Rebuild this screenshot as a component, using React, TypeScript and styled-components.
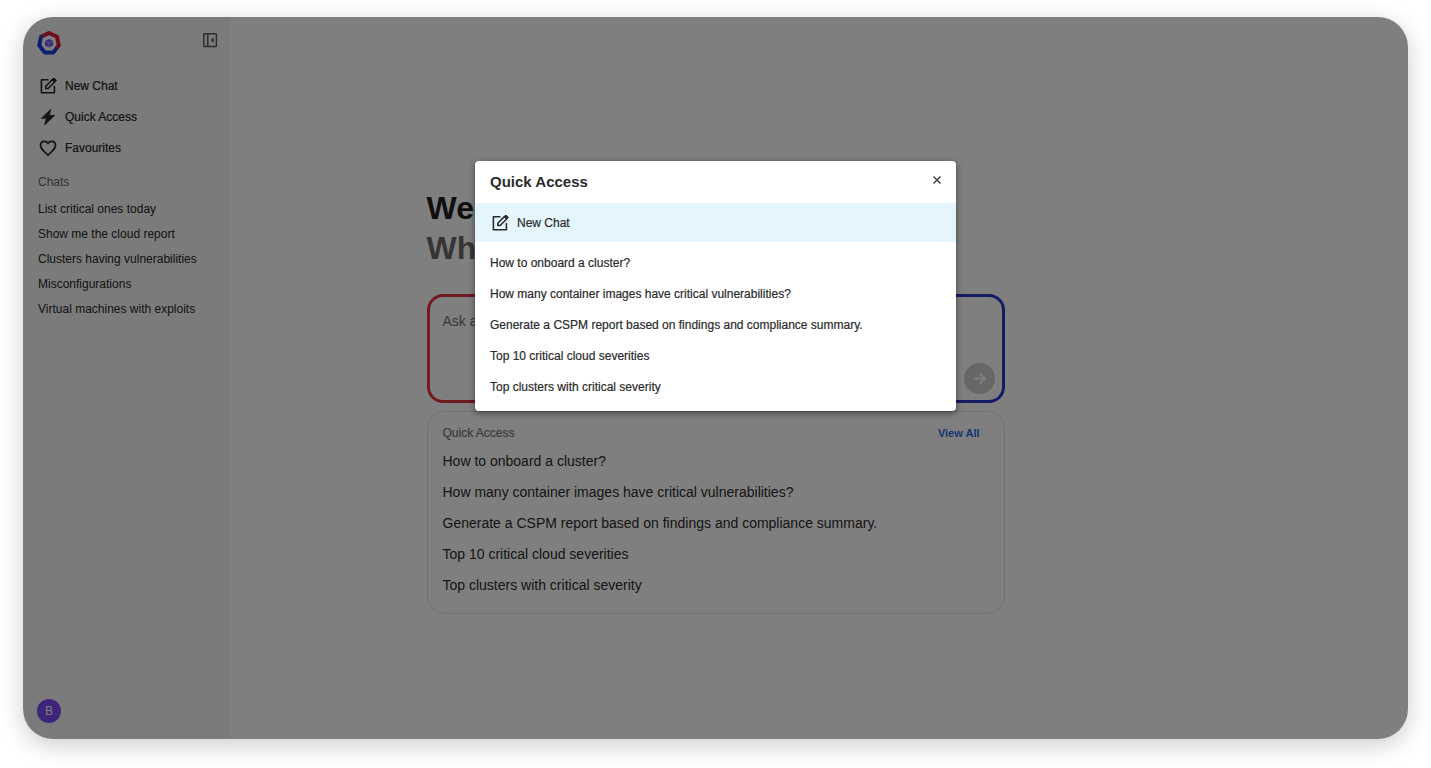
import React from "react";
import styled, { createGlobalStyle } from "styled-components";

const GlobalStyle = createGlobalStyle`
  *, *::before, *::after { box-sizing: border-box; }
  body {
    margin: 0;
    background: #ffffff;
    color: #2b2b2b;
    font-family: "Liberation Sans", Arial, sans-serif;
  }
  h1, h2, p, ul { margin: 0; padding: 0; }
  ul { list-style: none; }
  button {
    margin: 0;
    padding: 0;
    border: 0;
    background: none;
    color: inherit;
    font: inherit;
    text-align: left;
    cursor: pointer;
  }
`;

const Page = styled.div`
  display: flex;
  min-height: 100vh;
  padding: 17px 23px 29px;
`;

const Shell = styled.div`
  position: relative;
  flex: 1;
  display: grid;
  grid-template-columns: 207px 1fr 207px;
  border-radius: 30px;
  overflow: hidden;
  background: #ffffff;
`;

const Frame = styled.div`
  flex: 1;
  display: flex;
  border-radius: 30px;
  box-shadow: 0 6px 24px rgba(0, 0, 0, 0.2);
`;

const Sidebar = styled.aside`
  display: flex;
  flex-direction: column;
  padding: 13px 12px 16px 14px;
  background: #f7f7f7;
`;

const SidebarTop = styled.div`
  display: flex;
  justify-content: space-between;
  align-items: flex-start;
  height: 40px;
  color: #5a5a5a;
`;

const IconButton = styled.button`
  display: flex;
  padding: 2px 0;
`;

const Nav = styled.nav`
  display: flex;
  flex-direction: column;
`;

const NavItem = styled.button`
  display: flex;
  align-items: center;
  gap: 7px;
  height: 31px;
  padding-left: 1px;
  font-size: 12px;
  color: #262626;
  -webkit-text-stroke: 0.2px currentColor;
`;

const ChatsTitle = styled.h2`
  padding: 12px 1px 8px;
  font-size: 12px;
  font-weight: 400;
  line-height: 14px;
  color: #666666;
`;

const ChatLink = styled.a`
  display: block;
  padding-left: 1px;
  font-size: 12px;
  line-height: 25px;
  color: #262626;
  text-decoration: none;
  white-space: nowrap;
`;

const Avatar = styled.button`
  width: 24px;
  height: 24px;
  margin-top: auto;
  border-radius: 50%;
  background: #7a4bf8;
  color: #ffffff;
  font-size: 12px;
  text-align: center;
`;

const Main = styled.main`
  width: 100%;
  max-width: 578px;
  margin: 0 auto;
  padding-top: 171px;
`;

const Heading = styled.h1`
  font-size: 32px;
  line-height: 40px;
  color: #1f1f1f;
`;

const HeadingSub = styled.span`
  display: block;
  color: #6b6b6b;
`;

const Prompt = styled.form`
  display: flex;
  align-items: flex-end;
  height: 109px;
  margin-top: 26px;
  padding: 6px 7px 6px 9px;
  border: 3px solid transparent;
  border-radius: 16px;
  background:
    linear-gradient(#ffffff, #ffffff) padding-box,
    linear-gradient(90deg, #e5343b, #2138cc) border-box;
`;

const PromptInput = styled.textarea`
  flex: 1;
  height: 100%;
  padding: 9px 4px;
  border: 0;
  outline: 0;
  resize: none;
  background: transparent;
  font: 14px/18px "Liberation Sans", Arial, sans-serif;
  &::placeholder { color: #6f6f6f; opacity: 1; }
`;

const SendButton = styled.button`
  display: grid;
  place-items: center;
  width: 31px;
  height: 31px;
  border-radius: 50%;
  background: #cfcfcf;
  color: #ffffff;
`;

const Card = styled.section`
  margin-top: 8px;
  padding: 12px 24px 12px 15px;
  border: 1px solid #e2e2e2;
  border-radius: 18px;
`;

const CardHeader = styled.div`
  display: flex;
  justify-content: space-between;
  margin-bottom: 4px;
  font-size: 12px;
  line-height: 18px;
`;

const CardTitle = styled.h2`
  font-size: 12px;
  font-weight: 400;
  color: #757575;
  -webkit-text-stroke: 0.2px currentColor;
`;

const ViewAll = styled.a`
  color: #1f6fde;
  font-weight: 700;
  font-size: 11px;
  text-decoration: none;
`;

const Question = styled.button<{ $compact?: boolean }>`
  display: block;
  width: 100%;
  font-size: ${({ $compact }) => ($compact ? 12 : 14)}px;
  line-height: 31px;
  color: #2b2b2b;
  white-space: nowrap;
  -webkit-text-stroke: ${({ $compact }) => ($compact ? "0.2px currentColor" : "0")};
`;

const Overlay = styled.div`
  position: absolute;
  inset: 0;
  display: flex;
  justify-content: center;
  align-items: flex-start;
  padding-top: 144px;
  background: rgba(0, 0, 0, 0.5);
`;

const Dialog = styled.div`
  width: 100%;
  max-width: 481px;
  padding-bottom: 8px;
  border-radius: 4px;
  background: #ffffff;
  box-shadow: 0 2px 6px rgba(0, 0, 0, 0.5);
`;

const DialogHeader = styled.div`
  display: flex;
  justify-content: space-between;
  align-items: flex-start;
  height: 42px;
  padding: 12px 14px 0 15px;
`;

const DialogTitle = styled.h2`
  font-size: 15px;
  line-height: 18px;
`;

const DialogNewChat = styled.button`
  display: flex;
  align-items: center;
  gap: 7px;
  width: 100%;
  height: 39px;
  padding: 0 15px;
  background: #e4f5fd;
  font-size: 12px;
  -webkit-text-stroke: 0.2px currentColor;
`;

const DialogList = styled.ul`
  padding: 6px 15px 0;
`;

const questions = [
  "How to onboard a cluster?",
  "How many container images have critical vulnerabilities?",
  "Generate a CSPM report based on findings and compliance summary.",
  "Top 10 critical cloud severities",
  "Top clusters with critical severity",
];

const chats = [
  "List critical ones today",
  "Show me the cloud report",
  "Clusters having vulnerabilities",
  "Misconfigurations",
  "Virtual machines with exploits",
];

const Logo = () => (
  <svg width="26" height="26" viewBox="1 0 26 26" overflow="visible" aria-hidden="true">
    <defs>
      <linearGradient id="ring" x1="0.85" y1="0.1" x2="0.2" y2="0.85">
        <stop offset="0.35" stopColor="#d9183a" />
        <stop offset="0.65" stopColor="#1440dc" />
      </linearGradient>
    </defs>
    <path
      d="M13 3 21 6.800 22.800 15.300 17.400 22.400H8.600L3.200 15.300 5 6.800Z"
      fill="#ffffff" stroke="url(#ring)" strokeWidth="4" strokeLinejoin="round"
    />
    <path d="M13 9 17 11v4.500L13 17.500 9 15.500V11Z" fill="#6a5cf5" />
    <path d="M9.500 11.300 13 13l3.500-1.700M13 13v4.500" fill="none" stroke="#d8d4ff" strokeWidth="0.6" />
  </svg>
);

const EditIcon = () => (
  <svg width="20" height="20" viewBox="0 0 20 20" fill="none" stroke="currentColor" strokeWidth="1.600" aria-hidden="true">
    <path d="M10.500 3.800H3.400v13h13V10" strokeLinejoin="round" />
    <path d="M7.800 12.500V10.200L14.600 3.400l2.300 2.300-6.800 6.800Z" strokeLinejoin="round" />
    <path d="M14.200 3.800 16 2l2.400 2.400-1.800 1.800Z" fill="currentColor" strokeWidth="1" />
  </svg>
);

const BoltIcon = () => (
  <svg width="20" height="20" viewBox="0 0 20 20" fill="currentColor" stroke="currentColor" strokeWidth="0.6" strokeLinejoin="round" aria-hidden="true">
    <path d="M13 2 3.300 11.300h5L6.500 18.200l10.300-9.900h-5.400Z" />
  </svg>
);

const HeartIcon = () => (
  <svg width="20" height="20" viewBox="0 0 24 24" fill="none" stroke="currentColor" strokeWidth="2" aria-hidden="true">
    <path d="M12 20.500C5.500 14.800 3 12.300 3 8.700 3 6 5 4 7.600 4 9.300 4 11 4.900 12 6.300 13 4.900 14.700 4 16.400 4 19 4 21 6 21 8.700c0 3.600-2.500 6.100-9 11.800Z" />
  </svg>
);

const CollapseIcon = () => (
  <svg width="16" height="16" viewBox="0 0 16 16" fill="none" stroke="currentColor" strokeWidth="1.500" aria-hidden="true">
    <rect x="1.800" y="1.800" width="12.600" height="12.600" rx="0.500" />
    <path d="M5.800 2v12" />
    <path d="M11.600 5.300v5.600L8.600 8.100Z" fill="currentColor" stroke="none" />
  </svg>
);

const CloseIcon = () => (
  <svg width="10" height="10" viewBox="0 0 10 10" fill="none" stroke="#444" strokeWidth="1.500" aria-hidden="true">
    <path d="m1.500 1.500 7 7m0-7-7 7" />
  </svg>
);

const ArrowIcon = () => (
  <svg width="15" height="15" viewBox="0 0 15 15" fill="none" stroke="currentColor" strokeWidth="2" aria-hidden="true">
    <path d="M2 7.500h11M8 2.500l5 5-5 5" />
  </svg>
);

export default function App() {
  return (
    <>
      <GlobalStyle />
      <Page>
        <Frame>
          <Shell>
            <Sidebar>
              <SidebarTop>
                <Logo />
                <IconButton type="button" aria-label="Collapse sidebar">
                  <CollapseIcon />
                </IconButton>
              </SidebarTop>
              <Nav>
                <NavItem type="button"><EditIcon />New Chat</NavItem>
                <NavItem type="button"><BoltIcon />Quick Access</NavItem>
                <NavItem type="button"><HeartIcon />Favourites</NavItem>
              </Nav>
              <ChatsTitle>Chats</ChatsTitle>
              <ul>
                {chats.map((chat) => (
                  <li key={chat}><ChatLink href="#">{chat}</ChatLink></li>
                ))}
              </ul>
              <Avatar type="button" aria-label="Account">B</Avatar>
            </Sidebar>
            <Main>
              <Heading>
                Welcome
                <HeadingSub>What can I do?</HeadingSub>
              </Heading>
              <Prompt>
                <PromptInput aria-label="Ask a question" placeholder="Ask a question" />
                <SendButton type="button" aria-label="Send"><ArrowIcon /></SendButton>
              </Prompt>
              <Card>
                <CardHeader>
                  <CardTitle>Quick Access</CardTitle>
                  <ViewAll href="#">View All</ViewAll>
                </CardHeader>
                <ul>
                  {questions.map((q) => (
                    <li key={q}><Question type="button">{q}</Question></li>
                  ))}
                </ul>
              </Card>
            </Main>
            <Overlay>
              <Dialog role="dialog" aria-modal="true" aria-labelledby="dialog-title">
                <DialogHeader>
                  <DialogTitle id="dialog-title">Quick Access</DialogTitle>
                  <IconButton type="button" aria-label="Close"><CloseIcon /></IconButton>
                </DialogHeader>
                <DialogNewChat type="button"><EditIcon />New Chat</DialogNewChat>
                <DialogList>
                  {questions.map((q) => (
                    <li key={q}><Question type="button" $compact>{q}</Question></li>
                  ))}
                </DialogList>
              </Dialog>
            </Overlay>
          </Shell>
        </Frame>
      </Page>
    </>
  );
}
